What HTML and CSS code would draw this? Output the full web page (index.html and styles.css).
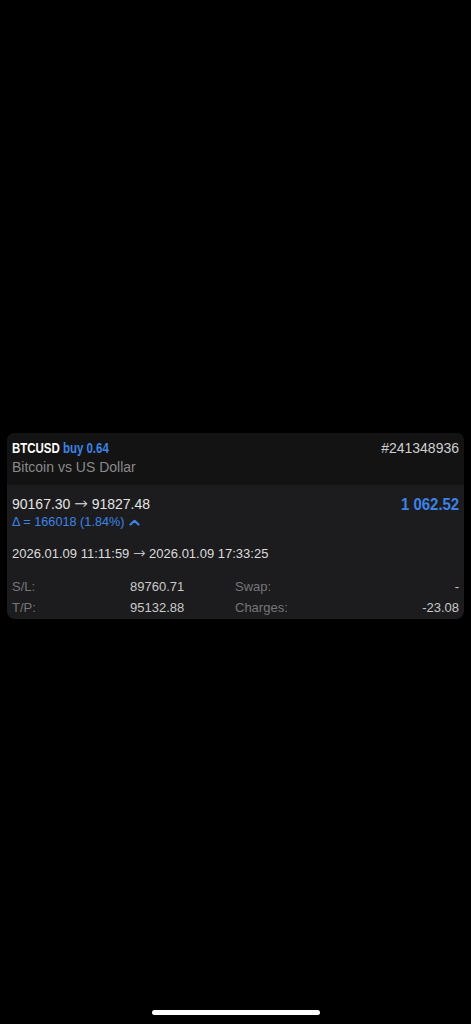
FILE: index.html
```html
<!DOCTYPE html>
<html lang="en">
<head>
    <meta charset="UTF-8">
    <meta name="viewport" content="width=device-width, initial-scale=1.0">
    <title>BTCUSD position</title>
    <link rel="stylesheet" href="styles.css">
</head>
<body>
    <div class="deal">
        <div class="deal-head">
            <div class="head-row">
                <div class="symbol"><span class="narrow">BTCUSD <span class="side">buy 0.64</span></span></div>
                <div class="ticket">#241348936</div>
            </div>
            <div class="desc">Bitcoin vs US Dollar</div>
        </div>

        <div class="deal-body">
            <div class="price-row">
                <div>
                    <div class="prices">90167.30 <span class="arrow">→</span> 91827.48</div>
                    <div class="delta">Δ = 166018 (1.84%)
                        <svg class="chev" width="11" height="7" viewBox="0 0 11 7">
                            <polyline points="1.5,5.5 5.5,1.8 9.5,5.5" fill="none" stroke="#3d83e6" stroke-width="2.2" stroke-linecap="round" stroke-linejoin="round"/>
                        </svg>
                    </div>
                </div>
                <div class="profit"><span class="narrow">1 062.52</span></div>
            </div>

            <div class="times">2026.01.09 11:11:59 <span class="arrow">→</span> 2026.01.09 17:33:25</div>

            <div class="params">
                <span class="label">S/L:</span>
                <span class="value">89760.71</span>
                <span class="label">Swap:</span>
                <span class="value right">-</span>
                <span class="label">T/P:</span>
                <span class="value">95132.88</span>
                <span class="label">Charges:</span>
                <span class="value right">-23.08</span>
            </div>
        </div>
    </div>

    <div class="home-bar"></div>
</body>
</html>
```

FILE: styles.css
```css
* {
    margin: 0;
    padding: 0;
    box-sizing: border-box;
}

body {
    font-family: "Liberation Sans", Arial, sans-serif;
    background-color: #000;
    color: #e2e2e2;
    min-height: 100vh;
    display: flex;
    flex-direction: column;
}

.deal {
    margin: 433px 7px 0;
    border-radius: 8px;
    overflow: hidden;
    background-color: #1c1c1e;
}

/* 窄體粗字 */
.narrow {
    display: inline-block;
    font-weight: bold;
    transform: scaleX(0.79);
    transform-origin: left center;
    white-space: nowrap;
}

.arrow {
    font-family: "DejaVu Sans", sans-serif;
    font-weight: 200;
    font-size: 1.15em;
    line-height: 1;
}

/* 上方標題 */
.deal-head {
    background-color: #131313;
    padding: 6px 5px 8px;
}

.head-row {
    display: flex;
    justify-content: space-between;
    align-items: baseline;
}

.symbol {
    font-size: 14.5px;
    line-height: 19px;
    color: #fff;
}

.side {
    color: #3d83e6;
}

.ticket {
    font-size: 14px;
    color: #cfcfcf;
}

.desc {
    font-size: 14px;
    line-height: 19px;
    color: #8a8a8a;
}

/* 內容 */
.deal-body {
    padding: 9px 5px 1px;
}

.price-row {
    display: flex;
    justify-content: space-between;
}

.prices {
    font-size: 14px;
    line-height: 20px;
    color: #e4e4e4;
}

.delta {
    font-size: 12.7px;
    line-height: 17px;
    color: #3d83e6;
    display: flex;
    align-items: center;
    gap: 4px;
}

.profit {
    font-size: 17px;
    line-height: 22px;
    color: #3d83e6;
}

.profit .narrow {
    transform: scaleX(0.88);
    transform-origin: right center;
}

.times {
    margin-top: 14px;
    font-size: 13px;
    line-height: 17px;
    color: #dcdcdc;
}

.params {
    margin-top: 14px;
    display: grid;
    grid-template-columns: 118px 105px 1fr auto;
    font-size: 13px;
    line-height: 21px;
}

.label {
    color: #767676;
}

.value {
    color: #c9c9c9;
}

.right {
    text-align: right;
}

.home-bar {
    width: 168px;
    height: 5px;
    border-radius: 3px;
    background-color: #fff;
    margin: auto auto 9px;
}
```
